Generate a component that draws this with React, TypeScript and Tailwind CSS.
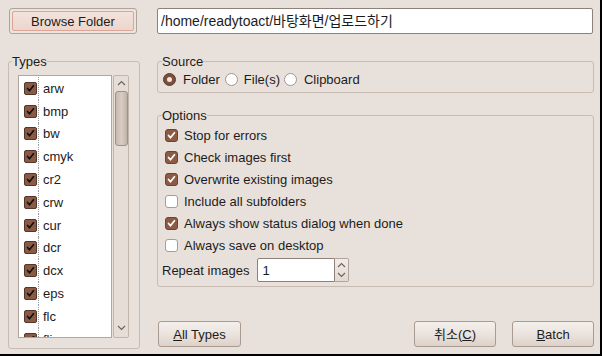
import type { ReactNode } from "react";

const TYPES = ["arw", "bmp", "bw", "cmyk", "cr2", "crw", "cur", "dcr", "dcx", "eps", "flc", "fli"];

const OPTIONS = [
  { label: "Stop for errors", checked: true },
  { label: "Check images first", checked: true },
  { label: "Overwrite existing images", checked: true },
  { label: "Include all subfolders", checked: false },
  { label: "Always show status dialog when done", checked: true },
  { label: "Always save on desktop", checked: false },
];

function Tick({ color }: { color: string }) {
  return (
    <svg viewBox="0 0 13 13" className="w-[13px] h-[13px]">
      <path d="M3 6.5 L5.3 9.2 L10 3.2" fill="none" stroke={color} strokeWidth="2" strokeLinecap="round" strokeLinejoin="round" />
    </svg>
  );
}

function Chevron({ up }: { up?: boolean }) {
  return (
    <svg viewBox="0 0 9 6" className="w-[9px] h-[6px]">
      <path d={up ? "M1 5 L4.5 1.5 L8 5" : "M1 1 L4.5 4.5 L8 1"} fill="none" stroke="#6f645c" strokeWidth="1.2" />
    </svg>
  );
}

function TypeCheck() {
  return (
    <span className="w-[13px] h-[13px] shrink-0 flex items-center justify-center bg-[#8a5a45] border border-[#533729] rounded-[2px]">
      <Tick color="#111" />
    </span>
  );
}

function OptCheck({ checked }: { checked: boolean }) {
  return checked ? (
    <span className="w-[13px] h-[13px] shrink-0 flex items-center justify-center bg-[#8d5b44] border border-[#6b4433] rounded-[3px]">
      <Tick color="#fff" />
    </span>
  ) : (
    <span className="block w-[13px] h-[13px] shrink-0 bg-white border border-[#a99c92] rounded-[3px]" />
  );
}

function Radio({ on }: { on?: boolean }) {
  return on ? (
    <span className="w-[13px] h-[13px] shrink-0 rounded-full bg-[#7b4f3b] border border-[#5e3b2c] flex items-center justify-center">
      <span className="block w-[5px] h-[5px] rounded-full bg-[#f1e7df]" />
    </span>
  ) : (
    <span className="block w-[13px] h-[13px] shrink-0 rounded-full bg-white border border-[#a2968d]" />
  );
}

function Button({ children, className }: { children: ReactNode; className?: string }) {
  return (
    <button className={`h-[26px] flex items-center justify-center rounded-[3px] border border-[#a99b90] bg-gradient-to-b from-[#f4f0ec] via-[#ebe3dd] to-[#ddd2c9] ${className ?? ""}`}>
      {children}
    </button>
  );
}

export default function App() {
  return (
    <div
      className="w-[602px] h-[356px] bg-[#e8e1db] border-r-2 border-b-2 border-black pl-2 pt-2 text-[13px] leading-[15px] text-[#1c1c1c] overflow-hidden"
      style={{ fontFamily: "'Liberation Sans', 'Noto Sans CJK KR', sans-serif" }}
    >
      {/* top row */}
      <div className="flex h-[26px]">
        <button className="ml-px w-[128px] h-[26px] rounded-[3px] border border-[#b1a399] p-[2px] bg-[#ece4de]">
          <span className="w-full h-full flex items-center justify-center border border-[#dca597] rounded-[2px] bg-gradient-to-b from-[#f3e3dc] to-[#ebd6cd]">
            Browse Folder
          </span>
        </button>
        <div className="ml-[20px] w-[436px] h-[26px] flex items-center bg-white border border-[#8e8179] rounded-[2px] pl-[3px] text-[14px]">
          /home/readytoact/바탕화면/업로드하기
        </div>
      </div>

      <div className="flex mt-[20px]">
        {/* Types */}
        <fieldset className="w-[132px] h-[295px] border border-[#c8bbb1] rounded-[3px] px-[3px] pb-0">
          <legend className="px-0 leading-[15px]">Types</legend>
          <div className="flex mt-[6px] ml-[6px]">
            <div className="w-[94px] h-[263px] bg-white border border-[#b3a69c] overflow-hidden pt-[1px]">
              {TYPES.map((t) => (
                <div key={t} className="flex h-[22.8px]">
                  <div className="w-[20px] h-full flex items-center justify-end border-r border-dotted border-[#9b9b9b] pr-[1px]">
                    <TypeCheck />
                  </div>
                  <div className="pl-[4px] flex items-center">{t}</div>
                </div>
              ))}
            </div>
            <div className="ml-[1px] w-[16px] h-[263px] border border-[#c2b5ab] rounded-[2px] bg-[#e6ddd6] flex flex-col items-center">
              <div className="mt-[3px] h-[8px] flex items-center">
                <Chevron up />
              </div>
              <div className="mt-[4px] w-[13px] h-[55px] rounded-[3px] border border-[#a09185] bg-gradient-to-r from-[#c9bab0] via-[#d8ccc3] to-[#c2b3a8]" />
              <div className="mt-auto mb-[5px] h-[8px] flex items-center">
                <Chevron />
              </div>
            </div>
          </div>
        </fieldset>

        {/* right column */}
        <div className="ml-[17px] w-[437px] h-[293px] flex flex-col">
          <fieldset className="h-[39px] border border-[#c8bbb1] rounded-[3px] px-[4px]">
            <legend className="px-0 leading-[15px]">Source</legend>
            <div className="flex items-center h-[16px] mt-[2px] ml-px">
              <Radio on />
              <span className="ml-[7px]">Folder</span>
              <span className="ml-[5px]">
                <Radio />
              </span>
              <span className="ml-[6px]">File(s)</span>
              <span className="ml-[4px]">
                <Radio />
              </span>
              <span className="ml-[7px]">Clipboard</span>
            </div>
          </fieldset>

          <fieldset className="mt-[15px] h-[179px] border border-[#c8bbb1] rounded-[3px] px-[4px]">
            <legend className="px-0 leading-[15px]">Options</legend>
            <div className="mt-[1px]">
              {OPTIONS.map((o) => (
                <div key={o.label} className="flex items-center h-[22px] ml-[3px]">
                  <OptCheck checked={o.checked} />
                  <span className="ml-[6px]">{o.label}</span>
                </div>
              ))}
            </div>
            <div className="flex items-center mt-[2px] h-[24px]">
              <span>Repeat images</span>
              <div className="ml-[8px] flex h-[24px]">
                <div className="w-[78px] h-full bg-white border border-[#8e8179] rounded-l-[2px] flex items-center pl-[4px]">1</div>
                <div className="w-[14px] h-full border border-l-0 border-[#b1a49a] rounded-r-[2px] bg-gradient-to-b from-[#f2ede8] to-[#e2d9d1] flex flex-col items-center justify-center gap-[4px]">
                  <Chevron up />
                  <Chevron />
                </div>
              </div>
            </div>
          </fieldset>

          <div className="mt-auto flex">
            <Button className="ml-px w-[83px]">
              <span>
                <span className="underline">A</span>ll Types
              </span>
            </Button>
            <Button className="ml-auto w-[82px]">
              <span>
                취소(<span className="underline">C</span>)
              </span>
            </Button>
            <Button className="ml-[16px] w-[82px]">
              <span>
                <span className="underline">B</span>atch
              </span>
            </Button>
          </div>
        </div>
      </div>
    </div>
  );
}
